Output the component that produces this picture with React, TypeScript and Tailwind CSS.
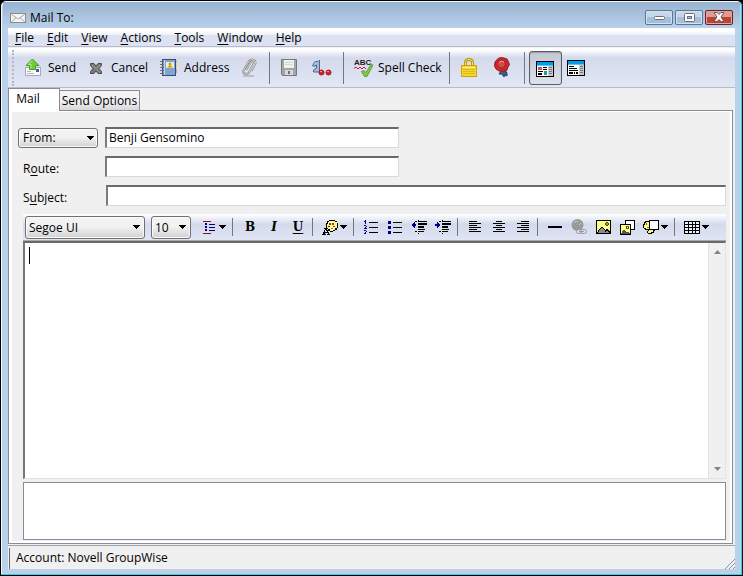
import type { ReactNode } from "react";
import clsx from "clsx";

type ToolProps = {
  label: string;
  className?: string;
  children: ReactNode;
};

const Key = ({ children }: { children: ReactNode }) => (
  <span className="underline underline-offset-2">{children}</span>
);

const Caret = () => (
  <svg width="7" height="4" viewBox="0 0 7 4" shapeRendering="crispEdges">
    <path d="M0 0h7v1h-1v1h-1v1h-1v1h-1v-1h-1v-1h-1v-1h-1z" fill="#000" />
  </svg>
);

const MailIcon = () => (
  <svg width="16" height="10" viewBox="0 0 16 10">
    <rect x=".5" y=".5" width="15" height="9" fill="#f4f4f2" stroke="#8d8d88" />
    <path d="M1.500 1.500l6.500 4.500l6.500-4.500M1.500 8.500l4.500-3.500M14.500 8.500l-4.500-3.500" fill="none" stroke="#a9a9a4" />
  </svg>
);

const SendIcon = () => (
  <svg width="18" height="20" viewBox="0 0 18 20">
    <rect x="1.500" y="9.500" width="15" height="8" fill="#f7f9fb" stroke="#a3abb5" />
    <path d="M3 13.500h4M3 15.500h7" stroke="#b2b9c2" />
    <rect x="12" y="11" width="3" height="3" fill="#2f62ae" />
    <path d="M8.500 1l6.500 6.500h-3.500v4h-6v-4h-3.500z" fill="#72c936" stroke="#4e9c2c" />
    <path d="M8.500 2.500l-4 4h2.500v4" fill="none" stroke="#b4ee7c" />
  </svg>
);

const CancelIcon = () => (
  <svg width="18" height="18" viewBox="0 0 18 18">
    <path
      d="M3.500 4.500h3.500l2 2.500l2-2.500h3.500v2l-2.500 3l2.500 3v2h-3.500l-2-2.500l-2 2.500h-3.500v-2l2.500-3l-2.500-3z"
      fill="#777"
      stroke="#4c4c4c"
    />
    <path d="M5 6l8 7.500M13 6l-3 3" stroke="#a2a2a2" />
  </svg>
);

const AddressIcon = () => (
  <svg width="18" height="19" viewBox="0 0 18 19">
    <path d="M15 2h2v3h-2z" fill="#e7b55c" />
    <path d="M15 6h2v4h-2z" fill="#e8d75f" />
    <path d="M15 11h2v4h-2z" fill="#d899b8" />
    <rect x="2.500" y="1.500" width="13" height="16" fill="#83a4d1" stroke="#344f79" />
    <path d="M4.500 2v15" stroke="#c3d5ed" />
    <rect x="6.500" y="4.500" width="7" height="5" fill="#fff1ad" stroke="#e1eafa" />
    <circle cx="10" cy="6" r="1.500" fill="#d99b00" />
    <path d="M7.500 9.500q0-2 2.500-2t2.500 2z" fill="#d99b00" />
    <path d="M0 3.500h4M0 6.500h4M0 9.500h4M0 12.500h4M0 15.500h4" stroke="#6d6d6d" />
  </svg>
);

const ClipIcon = () => (
  <svg width="18" height="20" viewBox="0 0 18 20">
    <path d="M3 18h11" stroke="#b9bdcd" strokeWidth="2" />
    <path
      d="M6 12l5-8c1-2 4-1 3 1.500l-5 9c-2 3-7 1-5.500-2l5-8.500c2-4 7-2.500 7 1l-4 8"
      fill="none"
      stroke="#858585"
      strokeWidth="2"
    />
    <path
      d="M6 12l5-8c1-2 4-1 3 1.500l-5 9c-2 3-7 1-5.500-2l5-8.500c2-4 7-2.500 7 1l-4 8"
      fill="none"
      stroke="#d9d9d6"
    />
  </svg>
);

const SaveIcon = () => (
  <svg width="16" height="17" viewBox="0 0 16 17">
    <path d="M.5.5h15v16h-14l-1-1z" fill="#a3a5a8" stroke="#74777b" />
    <rect x="3" y="1" width="10" height="8" fill="#eef0f1" />
    <path d="M4 3.500h8M4 5.500h8" stroke="#d6d8da" />
    <rect x="4" y="11" width="8" height="5" fill="#d8d9da" />
    <rect x="7" y="12" width="2" height="3" fill="#6b6e72" />
  </svg>
);

const SignIcon = () => (
  <svg width="20" height="18" viewBox="0 0 20 18">
    <path d="M1 13h6v-11l-3 1l-3 4l2 1l2-1l-3 4z" fill="#a5bad7" />
    <path d="M7.500 1v12M6.500 2l-4 1l-2 4h2l2-1v3l-3 2v2h6" fill="none" stroke="#4b6993" />
    <circle cx="9.500" cy="13.500" r="2.500" fill="#e42020" stroke="#98191e" />
    <circle cx="16.500" cy="13.500" r="2.500" fill="#e42020" stroke="#98191e" />
    <path d="M8 12.500h2M15 12.500h2" stroke="#ff9b91" />
  </svg>
);

const SpellIcon = () => (
  <svg width="20" height="20" viewBox="0 0 20 20">
    <text x="0" y="7" fontSize="8" fontWeight="700" fontFamily="Liberation Sans, sans-serif" fill="#222">
      ABC
    </text>
    <path d="M0 10.500l2-1.500l2 2l2-2l2 2l2-2l2 2" fill="none" stroke="#d7193d" />
    <path d="M7.500 13.500l2.500-1l2 2l5-8l2 .5l-6 11.500h-2.500z" fill="#82c84a" stroke="#5da039" />
  </svg>
);

const LockIcon = () => (
  <svg width="16" height="19" viewBox="0 0 16 19">
    <path d="M4.500 8v-3.500c0-4 7-4 7 0v3.500" fill="none" stroke="#b89a15" strokeWidth="3" />
    <path d="M4.500 8v-3.500c0-4 7-4 7 0v3.500" fill="none" stroke="#f9e46b" />
    <rect x=".5" y="7.500" width="15" height="11" fill="#f4d52b" stroke="#c9a40c" />
    <path d="M2 11.500h12M2 13.500h12M2 15.500h12" stroke="#dcbc1c" />
    <path d="M2 9.500h12" stroke="#fff080" />
  </svg>
);

const SealIcon = () => (
  <svg width="18" height="21" viewBox="0 0 18 21">
    <path d="M8 14l-2 3l3 0l2 3l1-2l2 1v-3l-2-3z" fill="#41598c" stroke="#293d69" />
    <path
      d="M5 1.500l3-1l3 .5l3 1l1.500 3l1 2.500l-1.500 2.500l-1 3l-4 1.500l-4-.5l-3-2l-1.500-3l.5-4z"
      fill="#c9282c"
      stroke="#9b1d20"
    />
    <circle cx="8.500" cy="7" r="4" fill="#d84a4a" stroke="#a32226" />
    <path d="M6 6l2-2l3 1" fill="none" stroke="#f49b94" />
  </svg>
);

const HtmlViewIcon = () => (
  <svg width="18" height="16" viewBox="0 0 18 16" shapeRendering="crispEdges">
    <path d="M0 0h18v16h-18z" />
    <path d="M1 1h16v3h-16z" fill="#009cee" />
    <path d="M1 4h16v1h-16z" fill="#52c6fb" />
    <path d="M1 5h11v10h-11z" fill="#fff" />
    <path d="M12 5h5v10h-5z" fill="#c9c9c9" />
    <path d="M2 6h4v3h-4z" fill="#c8555a" />
    <path d="M8 10h3v4h-3z" fill="#2a9690" />
    <path d="M7 6h4v1h-4zM7 8h4v1h-4zM2 10h5v1h-5zM2 12h4v2h-4z" />
    <path d="M13 6h3v1h-3zM13 8h3v1h-3zM13 10h3v1h-3zM13 12h3v1h-3z" fill="#777" />
  </svg>
);

const TextViewIcon = () => (
  <svg width="18" height="16" viewBox="0 0 18 16" shapeRendering="crispEdges">
    <path d="M0 0h18v16h-18z" />
    <path d="M1 1h16v3h-16z" fill="#009cee" />
    <path d="M1 4h16v1h-16z" fill="#52c6fb" />
    <path d="M1 5h11v10h-11z" fill="#fff" />
    <path d="M12 5h5v10h-5z" fill="#c9c9c9" />
    <path d="M2 6h5v1h-5zM2 8h8v1h-8zM2 10h9v1h-9zM2 12h4v2h-4zM7 12h1v2h-1zM9 12h2v2h-2z" />
    <path d="M13 6h3v1h-3zM13 8h3v1h-3zM13 10h3v1h-3zM13 12h3v1h-3z" fill="#777" />
  </svg>
);

const SpacingIcon = () => (
  <svg width="16" height="13" viewBox="0 0 16 13" shapeRendering="crispEdges">
    <path d="M2 0h8v1h-8zM2 12h8v1h-8z" fill="#8b1010" />
    <path d="M4 2h2v2h-2zM4 5h2v2h-2zM4 8h2v2h-2zM8 3h6v1h-6zM8 6h6v1h-6zM8 9h6v1h-6z" fill="#000085" />
  </svg>
);

const PaletteIcon = () => (
  <svg width="16" height="16" viewBox="0 0 16 16" shapeRendering="crispEdges">
    <path d="M7 1h6v1h2v2h1v5h-1v2h-2v1h-2v1h-3v-1h-2v-2h-2v-6h1v-2h2z" />
    <path d="M7 2h6v1h2v6h-2v2h-2v1h-3v-2h-2v-1h-1v-4h1v-2h1z" fill="#fff67a" />
    <path d="M6 4h1v1h-1zM9 3h1v1h-1zM12 4h1v1h-1zM8 9h1v1h-1zM12 8h1v1h-1z" fill="#fff" />
    <path d="M7 4h2v2h-2z" fill="#b02a2a" />
    <path d="M10 4h2v2h-2z" fill="#555" />
    <path d="M6 7h2v1h-2z" fill="#22a" />
    <path d="M11 7h2v1h-2z" fill="#a0a" />
    <path d="M9 9h2v1h-2z" fill="#0aa" />
    <path d="M2 9h3v2h1v2h1v2h1v1h-3v-1h1v-1h-3v1h1v1h-4v-1h1v-2h1v-2h1v-1h-1zM3 11v2h2v-1h-1v-1z" />
  </svg>
);

const NumbersIcon = () => (
  <svg width="14" height="14" viewBox="0 0 14 14" shapeRendering="crispEdges">
    <path
      d="M1 0h1v4h-1zM0 1h1v1h-1zM0 5h2v1h-2zM2 6h1v1h-1zM1 7h1v1h-1zM0 8h3v1h-3zM0 10h2v1h-2zM2 11h1v1h-1zM1 12h1v1h-1zM0 13h2v1h-2z"
      fill="#000085"
    />
    <path d="M5 2h9v1h-9zM5 7h9v1h-9zM5 12h9v1h-9z" />
  </svg>
);

const BulletsIcon = () => (
  <svg width="14" height="14" viewBox="0 0 14 14" shapeRendering="crispEdges">
    <path d="M0 1h3v3h-3zM0 6h3v3h-3zM0 11h3v3h-3z" fill="#000085" />
    <path d="M5 2h9v1h-9zM5 7h9v1h-9zM5 12h9v1h-9z" />
  </svg>
);

const OutdentIcon = () => (
  <svg width="16" height="14" viewBox="0 0 16 14" shapeRendering="crispEdges">
    <path d="M0 5h1v-1h1v-1h1v-1h1v2h1v2h-1v2h-1v-1h-1v-1h-1v-1h-1z" fill="#000085" />
    <path d="M7 0h1v1h-1zM4 1h2v1h-2zM7 1h9v1h-9zM7 3h9v2h-9zM7 6h6v2h-6zM7 9h7v1h-7zM4 11h2v1h-2zM7 11h6v1h-6zM7 13h1v1h-1z" />
  </svg>
);

const IndentIcon = () => (
  <svg width="16" height="14" viewBox="0 0 16 14" shapeRendering="crispEdges">
    <path d="M0 4h2v-2h1v1h1v1h1v2h-1v1h-1v1h-1v-2h-2z" fill="#000085" />
    <path d="M7 0h1v1h-1zM4 1h2v1h-2zM7 1h9v1h-9zM7 3h9v2h-9zM7 6h6v2h-6zM7 9h7v1h-7zM4 11h2v1h-2zM7 11h6v1h-6zM7 13h1v1h-1z" />
  </svg>
);

const AlignIcon = ({ d }: { d: string }) => (
  <svg width="12" height="12" viewBox="0 0 12 12" shapeRendering="crispEdges">
    <path d={d} />
  </svg>
);

const GlobeIcon = () => (
  <svg width="16" height="16" viewBox="0 0 16 16">
    <circle cx="6.500" cy="6" r="6" fill="#999" />
    <path d="M3 4l2-2l2 1M8 6l2-2" fill="none" stroke="#c9cbd5" />
    <rect x="5.500" y="10.500" width="6" height="4" rx="2" fill="#d9dcea" stroke="#999" />
    <rect x="9.500" y="10.500" width="6" height="4" rx="2" fill="#d9dcea" stroke="#999" />
    <path d="M8 12.500h5" stroke="#999" />
  </svg>
);

const PictureIcon = () => (
  <svg width="15" height="14" viewBox="0 0 15 14" shapeRendering="crispEdges">
    <path d="M0 0h15v14h-15z" />
    <path d="M1 1h13v12h-13z" fill="#ffff86" />
    <path d="M9 3h1v-1h2v1h1v2h-1v1h-2v-1h-1z" fill="#4a4410" />
    <path d="M10 3h2v2h-2z" fill="#a89a30" />
    <path d="M1 12h1v-2h1v-1h1v-1h1v-1h2v1h1v1h1v1h1v-1h2v1h1v1h1v2h-13z" />
    <path d="M2 12h1v-2h1v-1h1v-1h2v1h1v1h1v2h1v-1h2v1h1v1h-11z" fill="#8a8a8a" />
  </svg>
);

const PicturesIcon = () => (
  <svg width="15" height="15" viewBox="0 0 15 15" shapeRendering="crispEdges">
    <path d="M5 0h10v10h-10z" />
    <path d="M6 1h8v8h-8z" fill="#fff" />
    <path d="M0 4h11v11h-11z" />
    <path d="M1 5h9v9h-9z" fill="#ffff86" />
    <path d="M6 6h3v3h-3z" fill="#5e5510" />
    <path d="M7 7h1v1h-1z" fill="#fff" />
    <path d="M1 13h1v-2h1v-1h2v1h1v1h3v1h1v1h-9z" fill="#555" />
  </svg>
);

const BackgroundIcon = () => (
  <svg width="16" height="14" viewBox="0 0 16 14" shapeRendering="crispEdges">
    <path d="M2 1h5v9h5v1h-1v2h-2v1h-4v-1h-1v-2h1v-1h-3v-1h-1v-1h-1v-4h1v-2h1z" />
    <path d="M3 2h3v7h1v1h3v2h-2v1h-3v-2h1v-2h-3v-1h-2v-3h1v-2h1z" fill="#fff67a" />
    <path d="M3 3h1v2h-1z" fill="#a33" />
    <path d="M4 7h2v1h-2z" fill="#0aa" />
    <path d="M6 0h10v10h-10z" />
    <path d="M7 1h8v8h-8z" fill="#fff" />
  </svg>
);

const TableIcon = () => (
  <svg width="16" height="13" viewBox="0 0 16 13" shapeRendering="crispEdges">
    <path d="M0 0h16v13h-16z" />
    <path
      d="M1 1h3v2h-3zM5 1h3v2h-3zM9 1h2v2h-2zM12 1h3v2h-3zM1 4h3v2h-3zM5 4h3v2h-3zM9 4h2v2h-2zM12 4h3v2h-3zM1 7h3v2h-3zM5 7h3v2h-3zM9 7h2v2h-2zM12 7h3v2h-3zM1 10h3v2h-3zM5 10h3v2h-3zM9 10h2v2h-2zM12 10h3v2h-3z"
      fill="#eceff8"
    />
  </svg>
);

const Tool = ({ label, className, children }: ToolProps) => (
  <button type="button" aria-label={label} className={clsx("flex h-9 shrink-0 items-center", className)}>
    {children}
  </button>
);

const ToolSeparator = () => <div className="mx-1 h-8 w-px shrink-0 bg-[#76767f]" />;

const FormatTool = ({ label, children }: ToolProps) => (
  <button type="button" aria-label={label} className="flex size-6 shrink-0 items-center justify-center">
    {children}
  </button>
);

const FormatMenu = ({ label, children }: ToolProps) => (
  <button type="button" aria-label={label} className="flex h-6 w-[33px] shrink-0 items-center gap-0.5 pl-1">
    {children}
    <Caret />
  </button>
);

const FormatSeparator = () => <div className="mr-[5px] ml-0.5 h-[18px] w-px shrink-0 bg-[#76767f]" />;

const Select = ({ label, value, className }: { label: string; value: string; className: string }) => (
  <div className={clsx("relative h-[23px] shrink-0", className)}>
    <select
      aria-label={label}
      className="size-full appearance-none rounded-[3px] border border-[#707070] bg-linear-to-b from-[#f2f2f2] from-45% to-[#d2d2d2] pt-px pl-[3px] inset-shadow-[0_0_0_1px_#fafafa]"
    >
      <option>{value}</option>
    </select>
    <span className="pointer-events-none absolute inset-y-0 right-[5px] flex items-center">
      <Caret />
    </span>
  </div>
);

const menus = ["File", "Edit", "View", "Actions", "Tools", "Window", "Help"];

const field =
  "h-[21px] border-t-2 border-l-2 border-r border-b border-t-[#696969] border-l-[#7b7b7b] border-r-[#d9d9d9] border-b-[#d9d9d9] bg-white px-0.5 pb-0.5 outline-none";

const windowButton =
  "flex h-[15px] w-7 items-center justify-center rounded-[2px] border border-[#5b7592] bg-linear-to-b from-[#c6d7e9] from-45% to-[#a5bfda] to-50% inset-shadow-[0_0_0_1px_#d3e2f1]";

export default function App() {
  return (
    <div className="bg-black font-['Open_Sans','Noto_Sans',sans-serif] text-[12px] leading-4 text-black">
      <div className="flex min-h-screen flex-col rounded-t-[6px] border border-black border-r-[#101820] bg-[#b9d1ea] p-px pt-0 shadow-[inset_-1px_-1px_0_#35d0e6,inset_1px_1px_0_#f2f8fd]">
        <header className="mx-px mt-px flex h-[26px] shrink-0 items-center bg-linear-to-b from-[#98b3d1] to-[#b9d1ea] pt-1.5 pr-[7px] pl-[7px]">
          <MailIcon />
          <h1 className="flex-1 pl-1">Mail To:</h1>
          <div className="mb-0.5 flex gap-0.5">
            <button type="button" aria-label="Minimize" className={windowButton}>
              <svg width="11" height="4" viewBox="0 0 11 4" className="mt-0.5">
                <rect x=".5" y=".5" width="10" height="3" rx="1" fill="#fff" stroke="#6b6e7c" />
              </svg>
            </button>
            <button type="button" aria-label="Maximize" className={windowButton}>
              <svg width="11" height="9" viewBox="0 0 11 9">
                <rect x=".5" y=".5" width="10" height="8" rx="1" fill="#fff" stroke="#6b6e7c" />
                <rect x="3.500" y="3.500" width="4" height="2" fill="#a9c1db" stroke="#6b6e7c" />
              </svg>
            </button>
            <button
              type="button"
              aria-label="Close"
              className="flex h-[15px] w-7 items-center justify-center rounded-[2px] border border-[#6a2024] bg-linear-to-b from-[#dd9c92] from-45% to-[#bb4333] to-50% inset-shadow-[0_0_0_1px_#e0a79f]"
            >
              <svg width="12" height="10" viewBox="0 0 12 10">
                <path
                  d="M1 .5h3l2 2l2-2h3l-3 4.500l3 4.500h-3l-2-2l-2 2h-3l3-4.500z"
                  fill="#fff"
                  stroke="#6b5660"
                />
              </svg>
            </button>
          </div>
        </header>

        <main className="mx-1.5 mb-[5px] flex flex-1 flex-col bg-[#f0f0f0]">
          <nav className="flex h-[19px] shrink-0 items-center gap-[13px] border-b border-[#b6bccc] bg-linear-to-b from-white from-15% via-[#eef0f8] via-38% to-[#dce2f2] to-42% pt-0.5 pl-[7px]">
            {menus.map((menu) => (
              <button type="button" key={menu}>
                <Key>{menu[0]}</Key>
                {menu.slice(1)}
              </button>
            ))}
          </nav>

          {/* Main toolbar */}
          <div className="mt-px flex h-10 shrink-0 items-center border-b border-[#b6bccc] bg-linear-to-b from-white from-5% via-[#d4daec] via-25% to-[#e2e7f5] pl-1">
            <div className="mr-[5px] h-9 w-[3px] border-l-2 border-dotted border-[#b4b8c6]" />
            <Tool label="Send" className="w-[63px] gap-1.5 pl-1">
              <SendIcon />
              Send
            </Tool>
            <Tool label="Cancel" className="w-[73px] gap-1.5 pl-1">
              <CancelIcon />
              Cancel
            </Tool>
            <Tool label="Address" className="w-[77px] gap-1.5 pl-1">
              <AddressIcon />
              Address
            </Tool>
            <Tool label="Attach" className="w-8 justify-center">
              <ClipIcon />
            </Tool>
            <ToolSeparator />
            <Tool label="Save" className="w-[30px] justify-center">
              <SaveIcon />
            </Tool>
            <Tool label="Signature" className="w-[35px] justify-center">
              <SignIcon />
            </Tool>
            <ToolSeparator />
            <Tool label="Spell Check" className="w-[97px] gap-1 pl-1.5 whitespace-nowrap">
              <SpellIcon />
              Spell Check
            </Tool>
            <ToolSeparator />
            <Tool label="Encrypt" className="w-[30px] justify-center">
              <LockIcon />
            </Tool>
            <Tool label="Digitally sign" className="w-9 justify-center">
              <SealIcon />
            </Tool>
            <ToolSeparator />
            <button
              type="button"
              aria-label="HTML view"
              aria-pressed="true"
              className="flex h-[34px] w-[33px] items-center justify-center rounded-[3px] border border-[#5d5e65] bg-linear-to-b from-[#c3c7d2] to-[#dde1ed] pt-0.5 pr-0.5 inset-shadow-[0_1px_1px_#9a9da6]"
            >
              <HtmlViewIcon />
            </button>
            <Tool label="Plain text view" className="w-7 justify-center">
              <TextViewIcon />
            </Tool>
          </div>

          {/* Tabs */}
          <div role="tablist" className="flex h-[23px] shrink-0 items-end">
            <button
              type="button"
              role="tab"
              aria-selected="true"
              className="h-[23px] w-[52px] border-t border-r border-l border-[#8b8b98] bg-white pr-3 pb-0.5"
            >
              Mail
            </button>
            <button
              type="button"
              role="tab"
              aria-selected="false"
              className="h-[21px] w-20 border-t border-r border-b border-[#8b8b98] bg-linear-to-b from-[#f3f3f3] from-45% to-[#d8d8d8] whitespace-nowrap"
            >
              Send Options
            </button>
            <div className="mr-0.5 flex-1 border-b border-[#8b8b98]" />
          </div>

          <section className="mr-0.5 flex flex-1 flex-col border-r border-b border-l border-[#8b8b98] bg-white pt-px pr-0.5 pb-0.5 pl-[3px]">
            <div className="flex flex-1 flex-col gap-2 bg-[#f0f0f0] pt-[15px] pr-1 pl-1.5">
              <div className="flex">
                <div className="w-[87px] pt-px">
                  <button
                    type="button"
                    className="flex h-5 w-20 items-center justify-between rounded-[3px] border border-[#707070] bg-linear-to-b from-[#f2f2f2] from-45% to-[#d2d2d2] pr-[3px] pl-1 inset-shadow-[0_0_0_1px_#fafafa]"
                  >
                    From:
                    <Caret />
                  </button>
                </div>
                <input aria-label="From" defaultValue="Benji Gensomino" className={clsx(field, "w-[294px]")} />
              </div>
              <div className="flex">
                <label htmlFor="route" className="w-[87px] pt-[5px] pl-[5px]">
                  R<Key>o</Key>ute:
                </label>
                <input id="route" className={clsx(field, "w-[294px]")} />
              </div>
              <div className="flex">
                <label htmlFor="subject" className="w-[88px] pt-[5px] pl-[5px]">
                  S<Key>u</Key>bject:
                </label>
                <input id="subject" className={clsx(field, "min-w-0 flex-1")} />
              </div>

              <div className="ml-[5px] flex flex-1 flex-col">
                {/* Formatting toolbar */}
                <div className="flex h-[27px] shrink-0 items-center border-b border-[#a6a6b4] bg-linear-to-b from-white via-[#d4daec] via-40% to-[#e0e5f5] pl-0.5">
                  <Select label="Font" value="Segoe UI" className="mr-1.5 w-[120px]" />
                  <Select label="Font size" value="10" className="mr-1.5 w-10" />
                  <FormatMenu label="Line spacing">
                    <SpacingIcon />
                  </FormatMenu>
                  <FormatSeparator />
                  <FormatTool label="Bold">
                    <b className="font-['DejaVu_Serif',serif] text-[12px]">B</b>
                  </FormatTool>
                  <FormatTool label="Italic">
                    <b className="font-['DejaVu_Serif',serif] text-[12px] italic">I</b>
                  </FormatTool>
                  <FormatTool label="Underline">
                    <b className="font-['DejaVu_Serif',serif] text-[12px] underline underline-offset-2">U</b>
                  </FormatTool>
                  <FormatSeparator />
                  <FormatMenu label="Text color">
                    <PaletteIcon />
                  </FormatMenu>
                  <FormatSeparator />
                  <FormatTool label="Numbered list">
                    <NumbersIcon />
                  </FormatTool>
                  <FormatTool label="Bulleted list">
                    <BulletsIcon />
                  </FormatTool>
                  <FormatTool label="Decrease indent">
                    <OutdentIcon />
                  </FormatTool>
                  <FormatTool label="Increase indent">
                    <IndentIcon />
                  </FormatTool>
                  <FormatSeparator />
                  <FormatTool label="Align left">
                    <AlignIcon d="M0 0h8v1h-8zM0 2h12v1h-12zM0 4h8v1h-8zM0 6h12v1h-12zM0 8h8v1h-8zM0 10h12v1h-12z" />
                  </FormatTool>
                  <FormatTool label="Center">
                    <AlignIcon d="M3 0h6v1h-6zM0 2h12v1h-12zM3 4h6v1h-6zM0 6h12v1h-12zM3 8h6v1h-6zM0 10h12v1h-12z" />
                  </FormatTool>
                  <FormatTool label="Align right">
                    <AlignIcon d="M4 0h8v1h-8zM0 2h12v1h-12zM4 4h8v1h-8zM0 6h12v1h-12zM4 8h8v1h-8zM0 10h12v1h-12z" />
                  </FormatTool>
                  <FormatSeparator />
                  <FormatTool label="Horizontal line">
                    <span className="h-0.5 w-3.5 bg-black" />
                  </FormatTool>
                  <FormatTool label="Insert link">
                    <GlobeIcon />
                  </FormatTool>
                  <FormatTool label="Insert picture">
                    <PictureIcon />
                  </FormatTool>
                  <FormatTool label="Background picture">
                    <PicturesIcon />
                  </FormatTool>
                  <FormatMenu label="Background color">
                    <BackgroundIcon />
                  </FormatMenu>
                  <FormatSeparator />
                  <FormatMenu label="Insert table">
                    <TableIcon />
                  </FormatMenu>
                </div>

                {/* Message body */}
                <div className="flex flex-1 border-t-2 border-l-2 border-r border-b border-t-[#696969] border-l-[#777] border-r-[#e3e3e3] border-b-[#e3e3e3] bg-white">
                  <div className="flex flex-1 pt-1 pl-1">
                    <span className="h-[17px] w-px bg-black" />
                    <textarea aria-label="Message" className="flex-1 resize-none outline-none" />
                  </div>
                  <div className="flex w-[17px] flex-col items-center justify-between border-l border-[#e3e3e3] bg-[#f0f0f0] py-[7px]">
                    <svg width="7" height="4" viewBox="0 0 7 4">
                      <path d="M0 4l3.500-4l3.500 4z" fill="#858585" />
                    </svg>
                    <svg width="7" height="4" viewBox="0 0 7 4">
                      <path d="M0 0l3.500 4l3.500-4z" fill="#858585" />
                    </svg>
                  </div>
                </div>
                <div className="mt-[3px] mb-px h-[58px] shrink-0 border border-[#8b8b98] bg-white" />
              </div>
            </div>
          </section>

          <footer className="mt-px flex h-6 shrink-0 items-end justify-between border-t border-[#a0a0a8] bg-[#f0f0f0]">
            <div className="ml-px h-[21px] border-l border-[#696969] pt-0.5 pl-1.5">Account: Novell GroupWise</div>
            <svg width="10" height="10" viewBox="0 0 10 10">
              <path d="M0 10l10-10M4 10l6-6M8 10l2-2" stroke="#8c8c8c" />
            </svg>
          </footer>
        </main>
      </div>
    </div>
  );
}
